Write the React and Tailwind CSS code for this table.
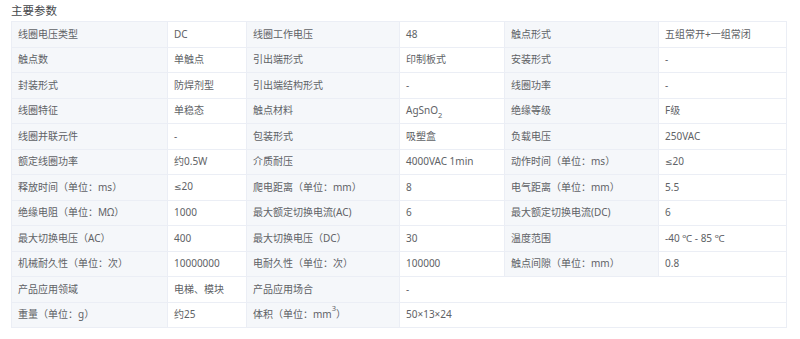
import React from 'react';

const le = <span className="font-['DejaVu_Sans'] text-[9px]">≤</span>;

const rows = [
    ['线圈电压类型', 'DC', '线圈工作电压', '48', '触点形式', '五组常开+一组常闭'],
    ['触点数', '单触点', '引出端形式', '印制板式', '安装形式', '-'],
    ['封装形式', '防焊剂型', '引出端结构形式', '-', '线圈功率', '-'],
    ['线圈特征', '单稳态', '触点材料', <>AgSnO<sub className="text-[7.5px] align-[-2px]">2</sub></>, '绝缘等级', 'F级'],
    ['线圈并联元件', '-', '包装形式', '吸塑盒', '负载电压', '250VAC'],
    ['额定线圈功率', '约0.5W', '介质耐压', '4000VAC 1min', '动作时间（单位：ms）', <>{le}20</>],
    ['释放时间（单位：ms）', <>{le}20</>, '爬电距离（单位：mm）', '8', '电气距离（单位：mm）', '5.5'],
    ['绝缘电阻（单位：MΩ）', '1000', '最大额定切换电流(AC)', '6', '最大额定切换电流(DC)', '6'],
    ['最大切换电压（AC）', '400', '最大切换电压（DC）', '30', '温度范围', '-40 ℃ - 85 ℃'],
    ['机械耐久性（单位：次）', '10000000', '电耐久性（单位：次）', '100000', '触点间隙（单位：mm）', '0.8'],
    ['产品应用领域', '电梯、模块', '产品应用场合', '-'],
    ['重量（单位：g）', '约25', <>体积（单位：mm<sup className="text-[7.5px] align-[4px]">3</sup>）</>, '50×13×24'],
];

const label = 'border border-[#ebeef5] bg-[#f5f7fa] px-[6px] py-0 text-left font-normal';
const value = 'border border-[#ebeef5] bg-white px-[6px] py-0 text-left';

export default function App() {
    return (
        <div className="w-[800px] h-[339px] bg-white pl-[11px] pt-[1px] text-[#606266]" style={{ fontFamily: '"Noto Sans", "Noto Sans CJK SC", sans-serif' }}>
            <div className="text-[11.5px] leading-[20px] text-[#45474b]">主要参数</div>
            <table className="w-[775px] table-fixed border-collapse text-[10px] leading-[15px]">
                <colgroup>
                    <col className="w-[156px]" />
                    <col className="w-[79px]" />
                    <col className="w-[153px]" />
                    <col className="w-[105px]" />
                    <col className="w-[154px]" />
                    <col className="w-[128px]" />
                </colgroup>
                <tbody>
                    {rows.map((r, i) => (
                        <tr key={i} className="h-[25.5px]">
                            <th className={label}>{r[0]}</th>
                            <td className={value}>{r[1]}</td>
                            <th className={label}>{r[2]}</th>
                            {r.length === 4 ? (
                                <td className={value} colSpan={3}>{r[3]}</td>
                            ) : (
                                <>
                                    <td className={value}>{r[3]}</td>
                                    <th className={label}>{r[4]}</th>
                                    <td className={value}>{r[5]}</td>
                                </>
                            )}
                        </tr>
                    ))}
                </tbody>
            </table>
        </div>
    );
}
